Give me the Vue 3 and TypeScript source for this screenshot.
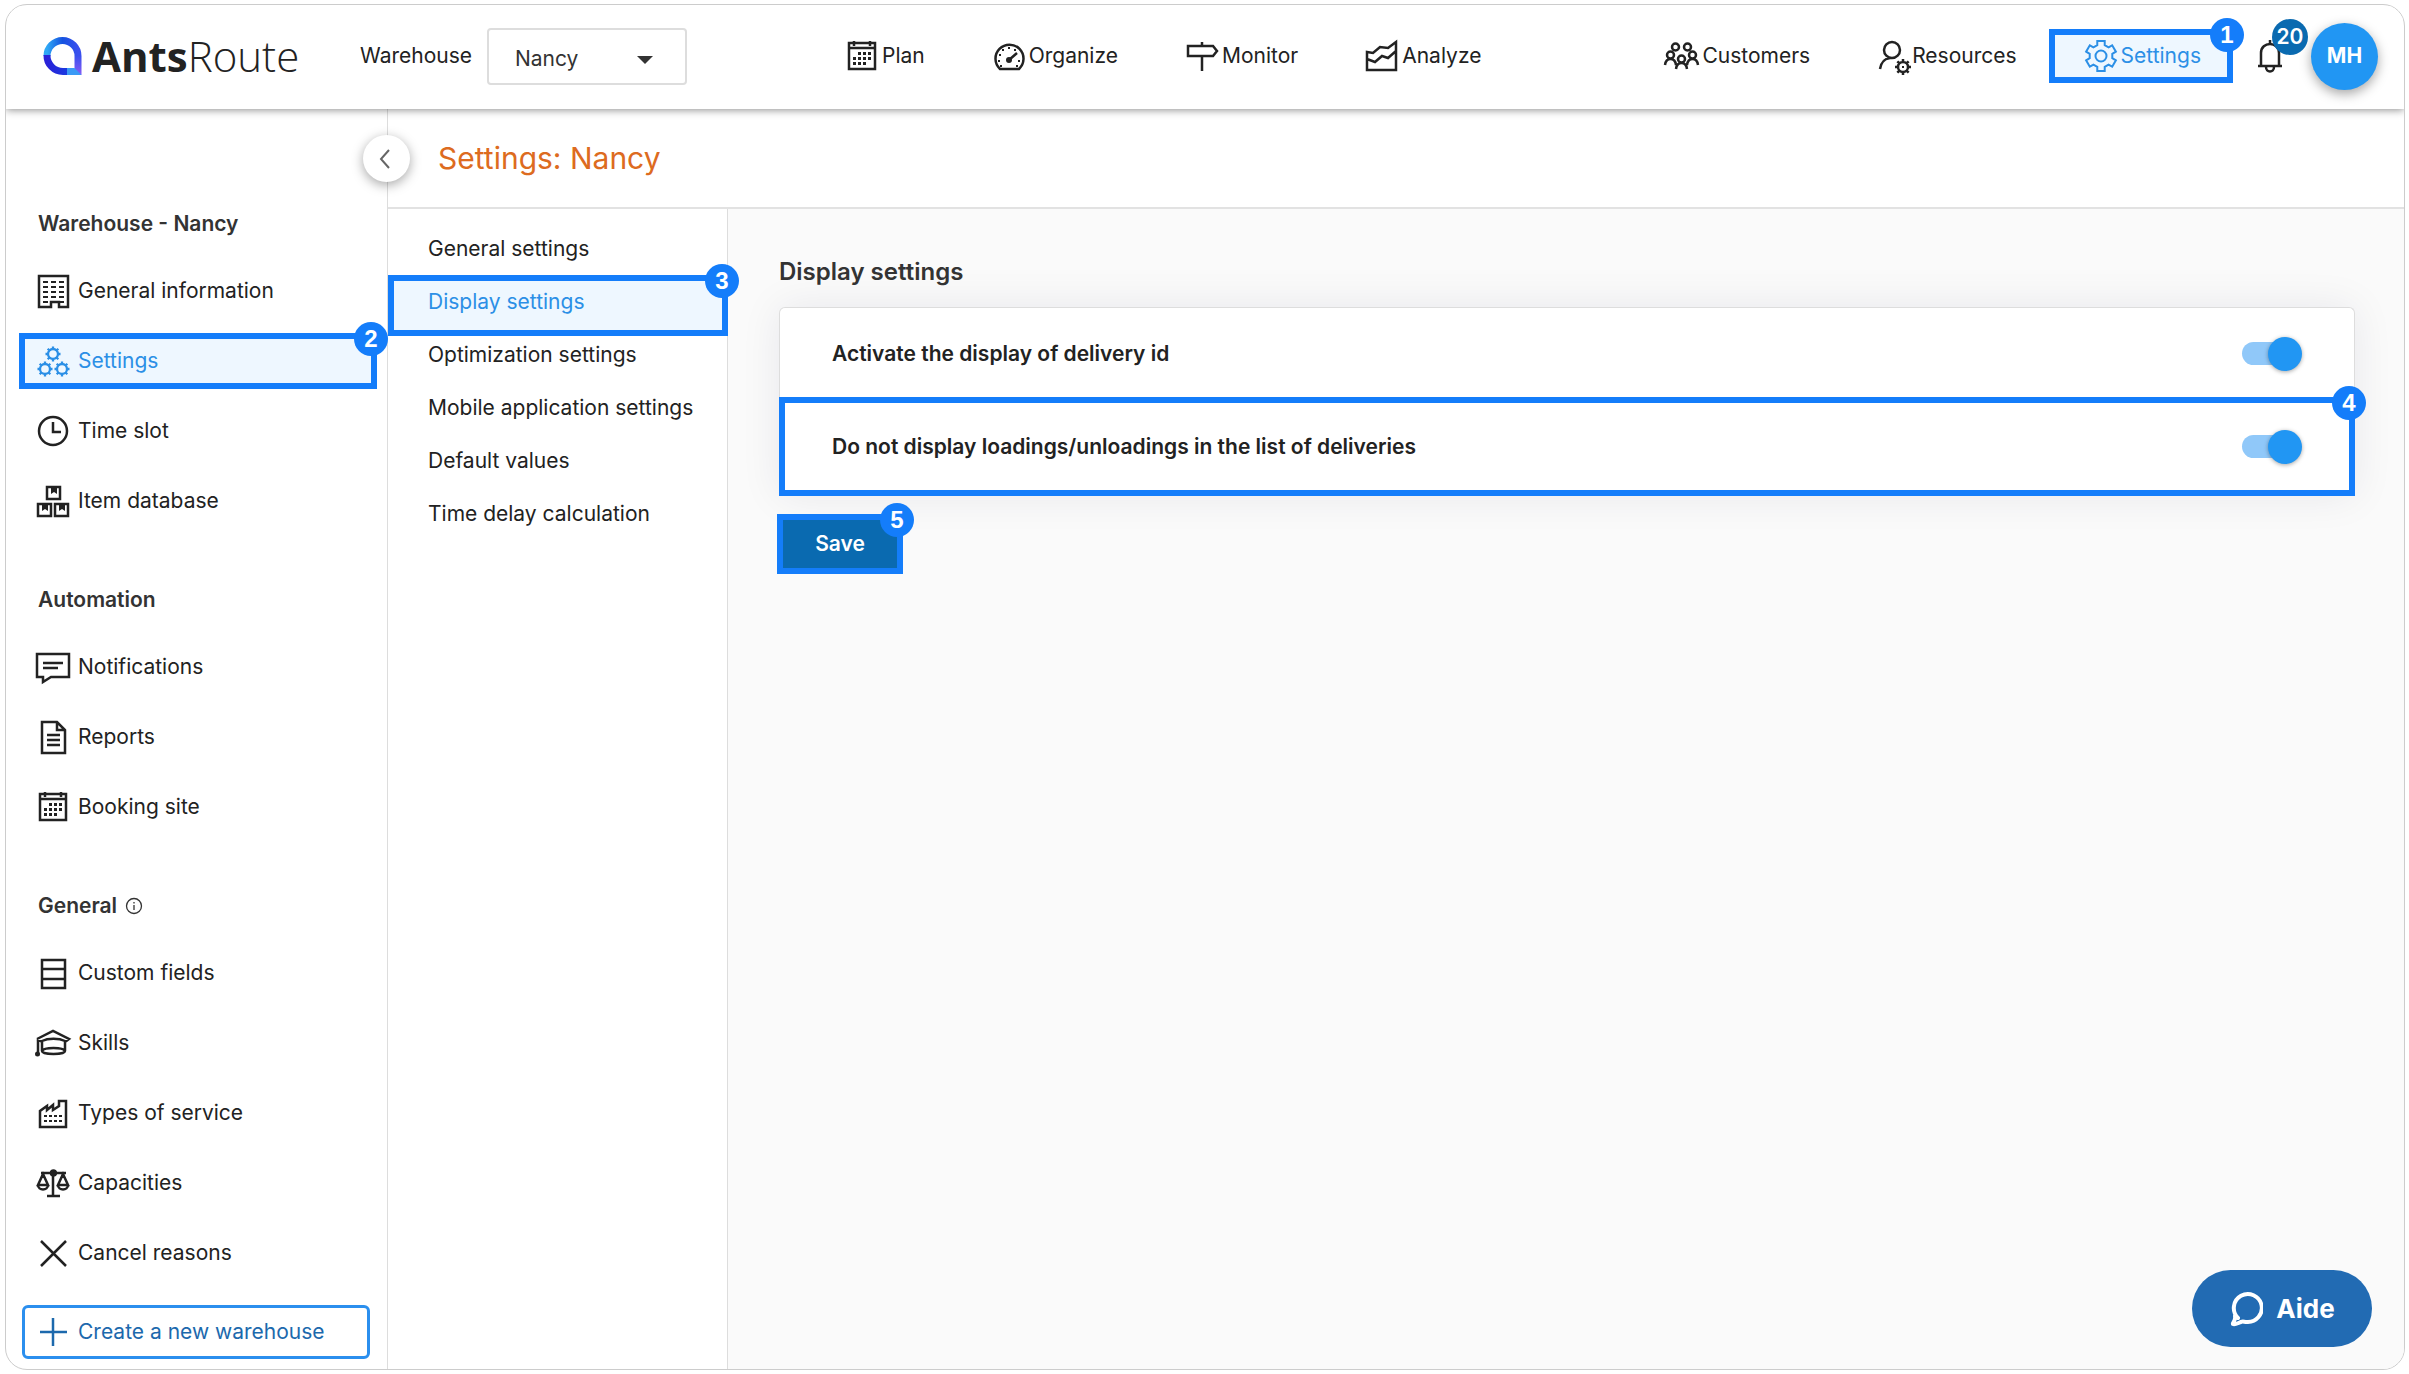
<script setup lang="ts">
import { ref } from 'vue'

interface NavItem {
  label: string
  icon: string
  active?: boolean
  step?: number
}

interface NavGroup {
  title: string
  info?: boolean
  items: NavItem[]
}

/** Builds the outline of a cog wheel with trapezoid teeth. */
function cog(cx: number, cy: number, outer: number, inner: number, teeth: number, wide = 0.5): string {
  const step = (Math.PI * 2) / teeth
  const points: string[] = []
  for (let i = 0; i < teeth; i++) {
    const mid = i * step - Math.PI / 2
    const top = (step * wide) / 2.6
    const foot = (step * wide) / 1.9
    const corners: [number, number][] = [
      [mid - foot, inner],
      [mid - top, outer],
      [mid + top, outer],
      [mid + foot, inner],
    ]
    for (const [angle, radius] of corners) {
      points.push(`${(cx + Math.cos(angle) * radius).toFixed(2)} ${(cy + Math.sin(angle) * radius).toFixed(2)}`)
    }
  }
  return `M${points.join('L')}Z`
}

/** A ring with short straight teeth, for the small gears. */
function gear(cx: number, cy: number, radius: number, reach: number): string {
  let path = `M${cx - radius} ${cy}a${radius} ${radius} 0 1 0 ${radius * 2} 0a${radius} ${radius} 0 1 0 ${-radius * 2} 0`
  for (let i = 0; i < 8; i++) {
    const x = Math.cos((i * Math.PI) / 4)
    const y = Math.sin((i * Math.PI) / 4)
    path += `M${(cx + x * radius).toFixed(2)} ${(cy + y * radius).toFixed(2)}L${(cx + x * reach).toFixed(2)} ${(cy + y * reach).toFixed(2)}`
  }
  return path
}

/** Small filled squares, given as x/y pairs. */
function dots(pairs: [number, number][], w = 3, h = 3): string {
  return pairs.map(([x, y]) => `M${x} ${y}h${w}v${h}h-${w}z`).join('')
}

interface Glyph {
  stroke?: string
  fill?: string
  width?: number
}

const calendar: Glyph = {
  stroke: 'M5 5H31V31H5ZM5 10H31M10 3V8M26 3V8',
  fill: dots([[14, 14], [19, 14], [24, 14], [9, 19], [14, 19], [19, 19], [24, 19], [9, 24], [14, 24], [19, 24]]),
}

const glyphs: Record<string, Glyph> = {
  calendar,
  gauge: {
    stroke: 'M9 31A14 14 0 1 1 28 31ZM18 22L26 15',
    fill:
      'M15 22a3 3 0 1 0 6 0a3 3 0 1 0 -6 0z' +
      dots([[17, 9], [11, 11], [23, 11], [8, 16], [7, 22], [27, 22], [9, 27], [25, 27]], 2, 2),
  },
  sign: { stroke: 'M4 8H29L33 13L29 18H4ZM18 4V8M18 18V33' },
  chart: { stroke: 'M3 32V14L9 15L16 9L24 10L32 4V32ZM3 21L11 24L18 18L24 20L32 13' },
  people: {
    stroke:
      'M8 9a3.500 3.500 0 1 0 7 0a3.500 3.500 0 1 0 -7 0M20 9a3.500 3.500 0 1 0 7 0a3.500 3.500 0 1 0 -7 0M3 17a3.500 3.500 0 1 0 7 0a3.500 3.500 0 1 0 -7 0M25 17a3.500 3.500 0 1 0 7 0a3.500 3.500 0 1 0 -7 0M14 21a3.500 3.500 0 1 0 7 0a3.500 3.500 0 1 0 -7 0M1 27C2 19 11 19 12 27M23 27C24 19 33 19 34 27M12 31C13 23 22 23 23 31',
    width: 2.5,
  },
  resource: {
    stroke: 'M10 12a8 8 0 1 0 16 0a8 8 0 1 0 -16 0M16 20C9 21 7 25 6 31' + gear(29, 29, 5, 8),
    fill: dots([[28, 28]], 2, 2),
  },
  cog: { stroke: cog(18, 18, 15.5, 11.5, 6, 0.6) + 'M12.500 18a5.500 5.500 0 1 0 11 0a5.500 5.500 0 1 0 -11 0', width: 2 },
  building: {
    stroke: 'M4 3H33V34H24V29H16V34H4Z',
    fill: dots(
      [8, 16, 24].flatMap((x) => [8, 13, 18, 23].map((y): [number, number] => [x, y])).concat([[8, 28], [24, 28]]),
      5,
      2,
    ),
  },
  cogs: { stroke: gear(18, 11, 5, 7.5) + gear(10, 26, 5, 7.5) + gear(27, 26, 5, 7.5), width: 2.3 },
  clock: { stroke: 'M4 18a14 14 0 1 0 28 0a14 14 0 1 0 -28 0M18 9V19H26' },
  boxes: {
    stroke: 'M12 4H25V16H12ZM3 21H16V33H3ZM20 21H33V33H20Z',
    fill: 'M16 4h6v7l-3 -2l-3 2zM7 21h6v7l-3 -2l-3 2zM24 21h6v7l-3 -2l-3 2z',
  },
  message: { stroke: 'M2 5H34V28H16L8 33V28H2ZM8 14H28M8 19H23' },
  report: { stroke: 'M7 3H22L30 11V34H7ZM22 3V11H30M12 16H25M12 21H25M12 26H25' },
  fields: { stroke: 'M7 5H30V33H7ZM7 14H30M7 24H30' },
  cap: {
    stroke: 'M2 14L18 6L34 14L30 17M2 14L7 17M7 15V26C7 30 30 30 30 26V15M7 16C13 13 24 13 30 16M7 26C9 22 28 22 30 26M3 14V29',
    fill: 'M0 29a2.500 2.500 0 1 0 5 0a2.500 2.500 0 1 0 -5 0z',
    width: 2.5,
  },
  factory: {
    stroke: 'M5 32V16L12 11V15L18 10V15L24 11V6H31V32Z',
    fill: dots([[9, 20], [14, 20], [19, 20], [24, 20], [9, 25], [14, 25], [19, 25], [24, 25]], 3, 2),
    width: 2.5,
  },
  scales: {
    stroke: 'M6 8H31M18 9V31M12 31H25M16 8a2 2 0 1 0 5 0a2 2 0 1 0 -5 0M8 9L3 20H13ZM28 9L23 20H33ZM3 20C3 26 13 26 13 20M23 20C23 26 33 26 33 20',
    width: 2.5,
  },
  cross: { stroke: 'M6 6L31 31M31 6L6 31' },
  plus: { stroke: 'M5 18H32M18 4V32' },
}

const mainNav: NavItem[] = [
  { label: 'Plan', icon: 'calendar' },
  { label: 'Organize', icon: 'gauge' },
  { label: 'Monitor', icon: 'sign' },
  { label: 'Analyze', icon: 'chart' },
]

const sideNav: NavItem[] = [
  { label: 'Customers', icon: 'people' },
  { label: 'Resources', icon: 'resource' },
  { label: 'Settings', icon: 'cog', active: true, step: 1 },
]

const groups: NavGroup[] = [
  {
    title: 'Warehouse - Nancy',
    items: [
      { label: 'General information', icon: 'building' },
      { label: 'Settings', icon: 'cogs', active: true, step: 2 },
      { label: 'Time slot', icon: 'clock' },
      { label: 'Item database', icon: 'boxes' },
    ],
  },
  {
    title: 'Automation',
    items: [
      { label: 'Notifications', icon: 'message' },
      { label: 'Reports', icon: 'report' },
      { label: 'Booking site', icon: 'calendar' },
    ],
  },
  {
    title: 'General',
    info: true,
    items: [
      { label: 'Custom fields', icon: 'fields' },
      { label: 'Skills', icon: 'cap' },
      { label: 'Types of service', icon: 'factory' },
      { label: 'Capacities', icon: 'scales' },
      { label: 'Cancel reasons', icon: 'cross' },
    ],
  },
]

const tabs = [
  'General settings',
  'Display settings',
  'Optimization settings',
  'Mobile application settings',
  'Default values',
  'Time delay calculation',
]
const activeTab = 'Display settings'

const options = ref([
  { id: 'delivery-id', label: 'Activate the display of delivery id', on: true, step: 0 },
  { id: 'hide-loadings', label: 'Do not display loadings/unloadings in the list of deliveries', on: true, step: 4 },
])

const warehouse = ref('Nancy')
</script>

<template>
  <div class="app">
    <header class="topbar">
      <div class="brand-side">
        <a class="brand" href="#" aria-label="AntsRoute">
          <svg class="brand-mark" viewBox="0 0 40 40" aria-hidden="true">
            <defs>
              <linearGradient id="top" x1="0" y1="0" x2="1" y2="0">
                <stop offset="0" stop-color="#2fa8f5" />
                <stop offset="0.5" stop-color="#1552e0" />
                <stop offset="1" stop-color="#3a50ee" />
              </linearGradient>
              <linearGradient id="side" x1="0" y1="0" x2="0" y2="1">
                <stop offset="0" stop-color="#3a50ee" />
                <stop offset="1" stop-color="#8a5cf5" />
              </linearGradient>
              <linearGradient id="low" x1="0" y1="0" x2="1" y2="0">
                <stop offset="0" stop-color="#2a22d8" />
                <stop offset="1" stop-color="#1a3ae0" />
              </linearGradient>
            </defs>
            <path d="M5 20A15.500 15.500 0 0 1 36 20" fill="none" stroke="url(#top)" stroke-width="7" />
            <path d="M32.500 20H39.500V39H32.500Z" fill="url(#side)" />
            <path d="M5 19A16 16 0 0 0 21 35.500H26" fill="none" stroke="url(#low)" stroke-width="7" />
            <path d="M25 32H32.500L39.500 39H25Z" fill="#3b9af5" />
          </svg>
          <span class="brand-name"><b>Ants</b>Route</span>
        </a>
        <label class="warehouse-label" for="warehouse">Warehouse</label>
        <div class="select-wrap">
          <select id="warehouse" v-model="warehouse">
            <option>Nancy</option>
          </select>
          <svg class="caret" viewBox="0 0 16 8" aria-hidden="true"><path d="M0 0H16L8 8Z" fill="#333" /></svg>
        </div>
      </div>

      <nav class="nav nav-main" aria-label="Main">
        <a v-for="item in mainNav" :key="item.label" class="nav-link" href="#">
          <svg class="icon" viewBox="0 0 36 36" aria-hidden="true">
            <path :d="glyphs[item.icon].stroke" class="line" :stroke-width="glyphs[item.icon].width ?? 2.5" />
            <path :d="glyphs[item.icon].fill" fill="currentColor" />
          </svg>
          <span>{{ item.label }}</span>
        </a>
      </nav>

      <div class="account">
        <nav class="nav" aria-label="Account">
          <a
            v-for="item in sideNav"
            :key="item.label"
            class="nav-link"
            :class="{ 'nav-link-active marked': item.active }"
            href="#"
          >
            <svg class="icon" viewBox="0 0 36 36" aria-hidden="true">
              <path :d="glyphs[item.icon].stroke" class="line" :stroke-width="glyphs[item.icon].width ?? 2.5" />
              <path :d="glyphs[item.icon].fill" fill="currentColor" />
            </svg>
            <span>{{ item.label }}</span>
            <span v-if="item.step" class="step">{{ item.step }}</span>
          </a>
        </nav>
        <button class="bell" type="button" aria-label="Alerts">
          <svg viewBox="0 0 26 34" aria-hidden="true">
            <path d="M1 27H25M4 27V14C4 2 22 2 22 14V27M13 1V5M9 28C9 34 17 34 17 28" class="line" stroke-width="2.5" />
          </svg>
          <span class="count">20</span>
        </button>
        <button class="avatar" type="button">MH</button>
      </div>
    </header>

    <div class="body">
      <aside class="sidebar">
        <button class="collapse" type="button" aria-label="Collapse menu">
          <svg viewBox="0 0 12 20" aria-hidden="true"><path d="M10 1L2 10L10 19" fill="none" stroke="#666" stroke-width="2" /></svg>
        </button>
        <section v-for="group in groups" :key="group.title" class="group">
          <h2>
            {{ group.title }}
            <svg v-if="group.info" class="info" viewBox="0 0 18 18" aria-hidden="true">
              <circle cx="9" cy="9" r="7.5" fill="none" stroke="#333" stroke-width="1.3" />
              <path d="M9 8V13M9 5V6.500" stroke="#333" stroke-width="1.3" />
            </svg>
          </h2>
          <a
            v-for="item in group.items"
            :key="item.label"
            class="side-link"
            :class="{ 'side-link-active marked': item.active }"
            href="#"
          >
            <svg class="icon" viewBox="0 0 36 36" aria-hidden="true">
              <path :d="glyphs[item.icon].stroke" class="line" :stroke-width="glyphs[item.icon].width ?? 2.5" />
              <path :d="glyphs[item.icon].fill" fill="currentColor" />
            </svg>
            <span>{{ item.label }}</span>
            <span v-if="item.step" class="step">{{ item.step }}</span>
          </a>
        </section>
        <button class="create" type="button">
          <svg class="icon" viewBox="0 0 36 36" aria-hidden="true">
            <path :d="glyphs.plus.stroke" class="line" stroke-width="2.5" />
          </svg>
          <span>Create a new warehouse</span>
        </button>
      </aside>

      <div class="page">
        <div class="title-bar">
          <h1>Settings: Nancy</h1>
        </div>
        <div class="columns">
          <nav class="tabs" aria-label="Settings sections">
            <a
              v-for="tab in tabs"
              :key="tab"
              class="tab"
              :class="{ 'tab-active marked': tab === activeTab }"
              href="#"
            >
              <span>{{ tab }}</span>
              <span v-if="tab === activeTab" class="step">3</span>
            </a>
          </nav>
          <main class="content">
            <h2 class="content-title">Display settings</h2>
            <div class="card">
              <div v-for="option in options" :key="option.id" class="row" :class="{ 'row-marked marked': option.step }">
                <label :for="option.id">{{ option.label }}</label>
                <input :id="option.id" v-model="option.on" class="toggle" type="checkbox" role="switch" />
                <span v-if="option.step" class="step">{{ option.step }}</span>
              </div>
            </div>
            <button class="save marked" type="button">
              Save
              <span class="step">5</span>
            </button>
          </main>
        </div>
      </div>
    </div>

    <button class="help" type="button">
      <svg viewBox="0 0 34 36" aria-hidden="true">
        <path
          d="M9 27A14 14 0 1 1 18 31C15 31 14 30 12 31C9 32 6 34 4 33C3 32 7 30 6 25"
          fill="none"
          stroke="#fff"
          stroke-width="4"
          stroke-linecap="round"
          stroke-linejoin="round"
        />
      </svg>
      <span>Aide</span>
    </button>
  </div>
</template>

<style>
body {
  background: #fff;
}
</style>

<style scoped>
.app,
.app * {
  box-sizing: border-box;
}

.app {
  position: relative;
  display: flex;
  flex-direction: column;
  min-height: calc(100vh - 8px);
  margin: 4px 4px 4px 5px;
  border: 1px solid #ccc;
  border-radius: 22px;
  overflow: hidden;
  background: #fff;
  color: #222;
  font-family: Inter, "Open Sans", sans-serif;
  font-size: 21px;
  line-height: 30px;
}

button,
select {
  font: inherit;
  color: inherit;
  border: 0;
  background: none;
  padding: 0;
  cursor: pointer;
}

a {
  color: inherit;
  text-decoration: none;
}

h1,
h2 {
  margin: 0;
}

.line {
  fill: none;
  stroke: currentColor;
}

.icon {
  flex: none;
  width: 36px;
  height: 36px;
  overflow: visible;
}

/* Numbered walkthrough markers */
.marked {
  position: relative;
  box-shadow: inset 0 0 0 6px #147dfa;
}

.step {
  position: absolute;
  top: -11px;
  right: -11px;
  width: 34px;
  height: 34px;
  border-radius: 50%;
  background: #147dfa;
  color: #fff;
  font-family: "Liberation Sans", sans-serif;
  font-size: 24px;
  font-weight: 700;
  line-height: 34px;
  text-align: center;
}

/* Top bar */
.topbar {
  position: relative;
  z-index: 2;
  display: grid;
  grid-template-columns: auto 1fr auto;
  align-items: center;
  height: 104px;
  padding: 0 26px 2px 36px;
  background: #fff;
  box-shadow: 0 1px 8px rgba(0, 0, 0, 0.45);
}

.brand-side,
.account,
.nav {
  display: flex;
  align-items: center;
}

.brand {
  display: flex;
  align-items: center;
  gap: 10px;
  width: 318px;
}

.brand-mark {
  width: 40px;
  height: 40px;
}

.brand-name {
  font-family: "Open Sans", "Noto Sans", sans-serif;
  font-size: 42px;
  font-weight: 300;
  line-height: 48px;
}

.brand-name b {
  font-weight: 700;
}

.select-wrap {
  position: relative;
  margin-left: 15px;
}

.select-wrap select {
  width: 200px;
  height: 57px;
  padding: 6px 26px 0;
  border: 2px solid #ddd;
  border-radius: 4px;
  appearance: none;
  background: #fff;
  color: #333;
}

.caret {
  position: absolute;
  top: 28px;
  right: 34px;
  width: 16px;
  height: 8px;
  pointer-events: none;
}

.nav-main {
  justify-content: center;
  padding-left: 6px;
}

.nav-link {
  display: flex;
  align-items: center;
  gap: 2px;
  height: 54px;
  padding: 0 32px;
}

.nav-main .nav-link {
  padding: 0 33px;
}

.nav-link-active {
  padding-left: 34px;
}

.nav-link-active,
.side-link-active,
.tab-active {
  background: #eef7ff;
  color: #2b8fe6;
}

.bell {
  position: relative;
  width: 26px;
  height: 34px;
  margin: 0 28px 0 24px;
}

.bell svg {
  display: block;
  width: 26px;
  height: 34px;
}

.count {
  position: absolute;
  top: -20px;
  left: 15px;
  width: 36px;
  height: 36px;
  border-radius: 50%;
  background: #0a6ab0;
  color: #fff;
  font-size: 21px;
  font-weight: 600;
  line-height: 36px;
  text-align: center;
}

.avatar {
  width: 67px;
  height: 67px;
  border-radius: 50%;
  background: #2196f3;
  box-shadow: 0 4px 12px rgba(0, 0, 0, 0.35);
  color: #fff;
  font-weight: 700;
}

/* Sidebar */
.body {
  display: flex;
  flex: 1;
}

.sidebar {
  position: relative;
  flex: none;
  width: 382px;
  padding: 100px 10px 10px 13px;
  border-right: 1px solid #ddd;
}

.collapse {
  position: absolute;
  z-index: 1;
  top: 26px;
  right: -23px;
  display: flex;
  align-items: center;
  justify-content: center;
  width: 47px;
  height: 47px;
  padding-right: 4px;
  border-radius: 50%;
  background: #fff;
  box-shadow: 0 3px 12px rgba(0, 0, 0, 0.35);
}

.collapse svg {
  width: 12px;
  height: 20px;
}

.group {
  display: flex;
  flex-direction: column;
  gap: 14px;
  margin-bottom: 56px;
}

.group:last-of-type {
  margin-bottom: 24px;
}

.group h2 {
  display: flex;
  align-items: center;
  gap: 8px;
  margin: 0 0 10px 19px;
  color: #333;
  font-size: 21px;
  font-weight: 600;
  line-height: 30px;
}

.info {
  width: 18px;
  height: 18px;
}

.side-link {
  display: flex;
  align-items: center;
  gap: 7px;
  height: 56px;
  padding-left: 16px;
}

.create {
  display: flex;
  align-items: center;
  gap: 7px;
  width: 348px;
  height: 54px;
  margin-left: 3px;
  padding-left: 10px;
  border: 3px solid #2b8fee;
  border-radius: 6px;
  color: #1c69ad;
}

/* Page */
.page {
  display: flex;
  flex: 1;
  flex-direction: column;
  min-width: 0;
}

.title-bar {
  display: flex;
  align-items: center;
  height: 100px;
  padding-left: 50px;
  border-bottom: 2px solid #e2e2e2;
}

h1 {
  color: #dd6b20;
  font-size: 30px;
  font-weight: 400;
  line-height: 36px;
}

.columns {
  display: flex;
  flex: 1;
}

.tabs {
  flex: none;
  width: 340px;
  padding-top: 13px;
  border-right: 1px solid #ddd;
}

.tab {
  display: block;
  height: 53px;
  padding-left: 40px;
  line-height: 53px;
}

.tab-active {
  height: 61px;
  margin: 0 -1px -8px 0;
}

.content {
  flex: 1;
  min-width: 0;
  padding: 48px 49px 48px 51px;
  background: #fafafa;
}

.content-title {
  color: #333;
  font-size: 24px;
  font-weight: 600;
  line-height: 30px;
}

.card {
  margin-top: 20px;
  border: 1px solid #ddd;
  border-bottom: 0;
  border-radius: 6px 6px 0 0;
  background: #fff;
  box-shadow: 0 0 40px rgba(30, 30, 60, 0.08);
}

.row {
  display: flex;
  align-items: center;
  justify-content: space-between;
  height: 92px;
  padding: 0 52px;
  font-weight: 600;
}

.row-marked {
  height: 99px;
  margin: -3px -1px 0;
  padding: 0 53px;
}

.toggle {
  position: relative;
  width: 60px;
  height: 34px;
  margin: 0;
  appearance: none;
  cursor: pointer;
}

.toggle::before {
  content: "";
  position: absolute;
  top: 5px;
  left: 0;
  width: 54px;
  height: 23px;
  border-radius: 12px;
  background: #90c8f9;
}

.toggle::after {
  content: "";
  position: absolute;
  top: 0;
  right: 0;
  width: 34px;
  height: 34px;
  border-radius: 50%;
  background: #2196f3;
  box-shadow: 0 1px 4px rgba(0, 0, 0, 0.35);
}

.save {
  width: 126px;
  height: 60px;
  margin: 18px 0 0 -2px;
  background: #0a6ab0;
  color: #fff;
  font-weight: 600;
}

.help {
  position: fixed;
  right: 37px;
  bottom: 27px;
  display: flex;
  align-items: center;
  justify-content: center;
  gap: 13px;
  width: 180px;
  height: 77px;
  border-radius: 39px;
  background: #226bb3;
  color: #fff;
  font-size: 26px;
  font-weight: 700;
}

.help svg {
  width: 34px;
  height: 36px;
}
</style>
